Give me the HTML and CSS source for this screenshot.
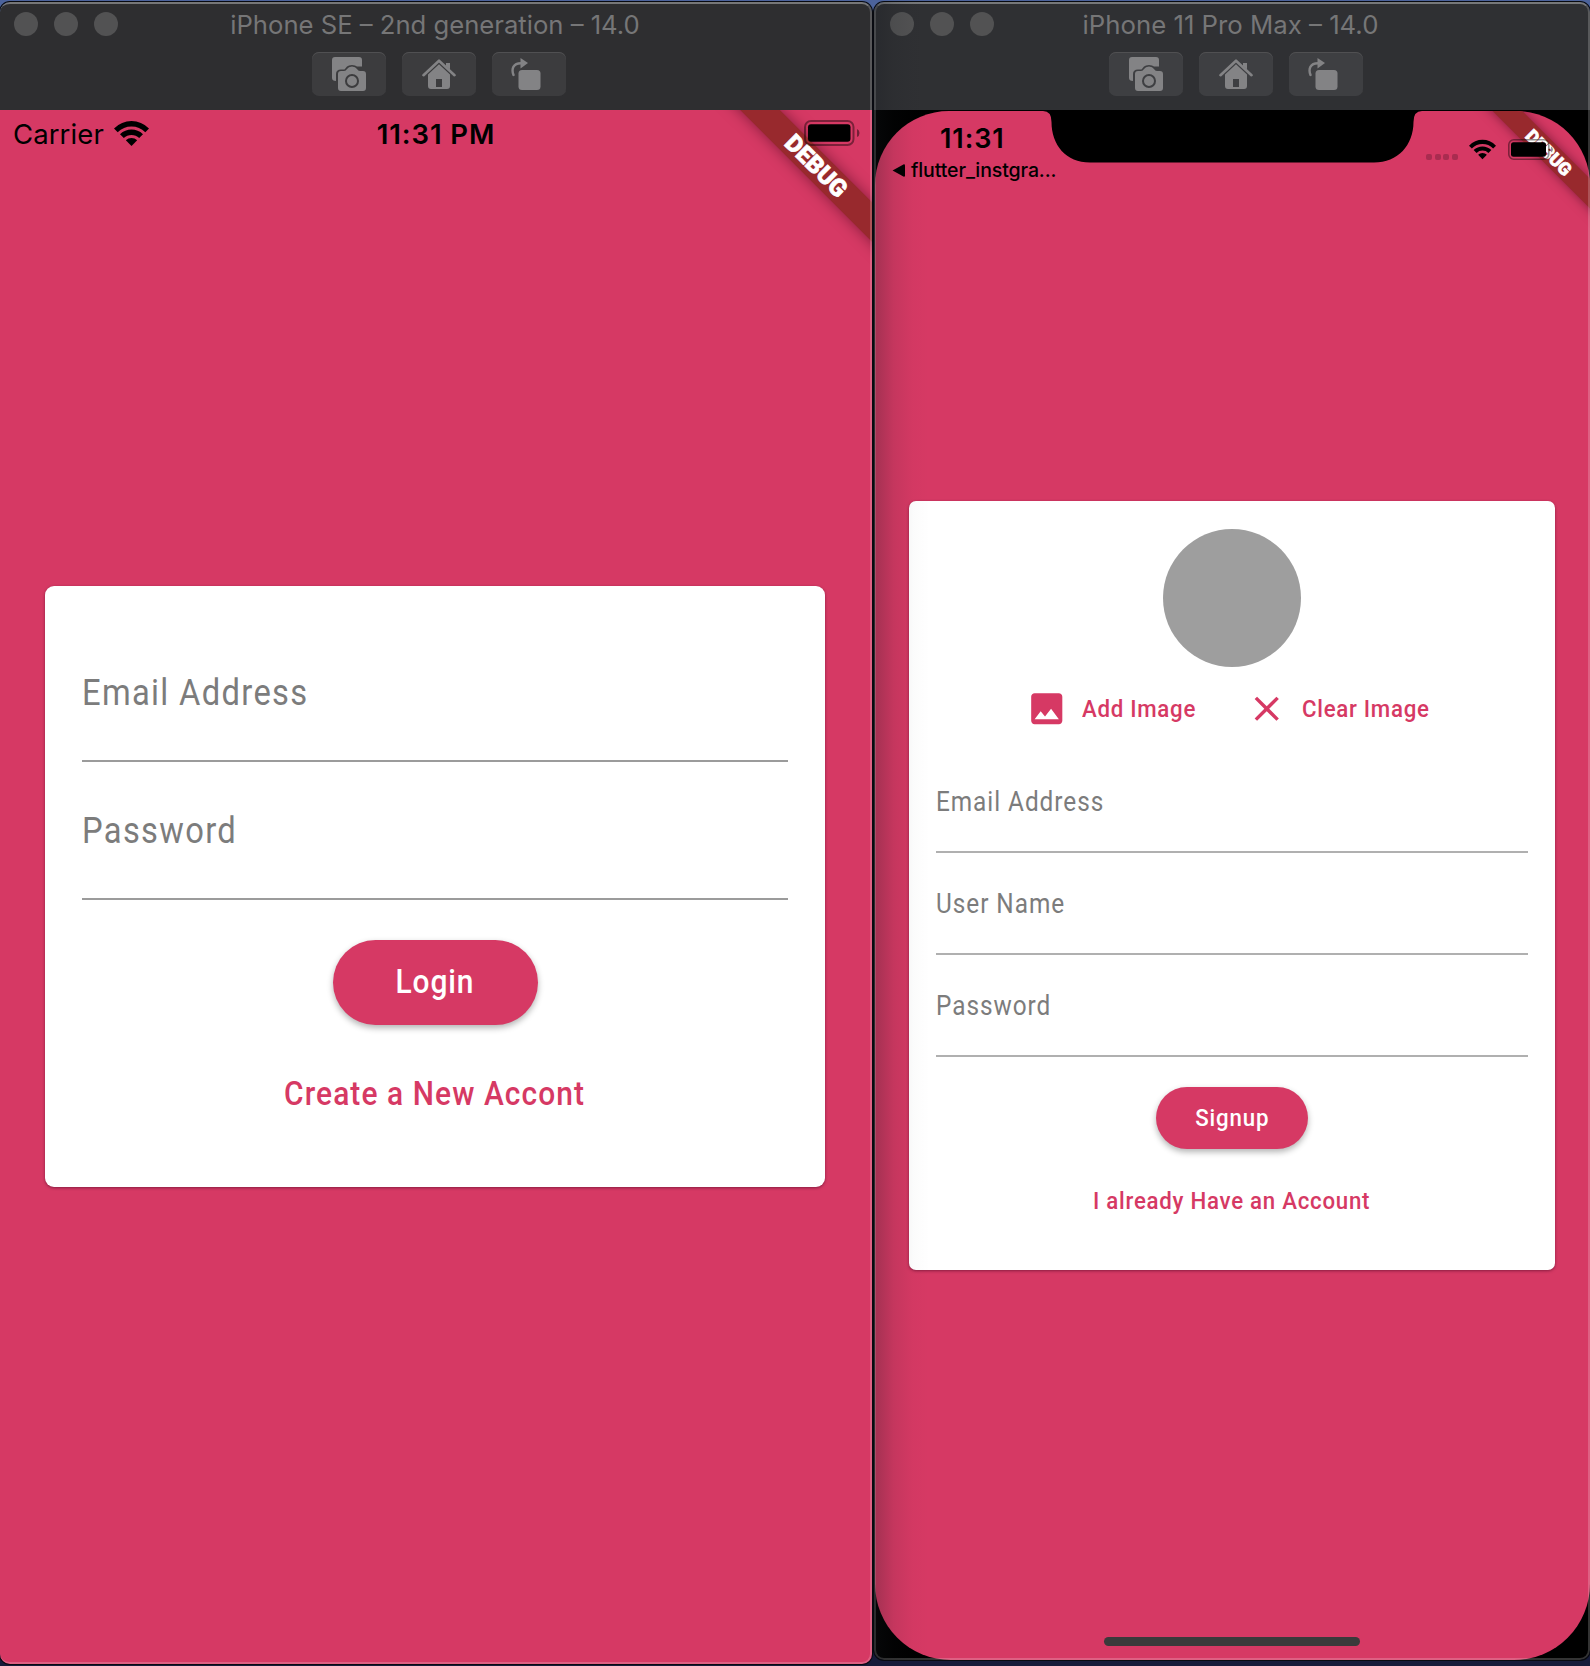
FILE: index.html
```html
<!DOCTYPE html>
<html lang="en">
<head>
<meta charset="utf-8">
<title>Simulators</title>
<link rel="stylesheet" href="styles.css">
</head>
<body>
<svg class="defs" width="0" height="0" aria-hidden="true">
  <symbol id="shot" viewBox="0 0 34 34">
    <path d="M3 0H27Q30 0 30 3V9.500H25Q23.500 8 20 8Q16.500 8 15 9.500L12.500 12.500H9Q4 12.500 4 17V24Q0 24 0 21V3Q0 0 3 0Z"/>
    <path fill-rule="evenodd" d="M9 14H12Q14 14 15 12Q16.500 9.500 20 9.500Q23.500 9.500 25 12Q26 14 28 14H31Q34 14 34 17V31Q34 34 31 34H9Q6 34 6 31V17Q6 14 9 14ZM20 17A7 7 0 1 0 20 31A7 7 0 1 0 20 17ZM20 19A5 5 0 1 1 20 29A5 5 0 1 1 20 19Z"/>
  </symbol>
  <symbol id="house" viewBox="0 0 34 30">
    <path d="M1.500 16.200L17 1.700L32.500 16.200" fill="none" stroke="currentColor" stroke-width="2.600" stroke-linecap="round" stroke-linejoin="round"/>
    <path d="M24 4H28V10.500L24 7Z"/>
    <path fill-rule="evenodd" d="M17 5.200L28 15.500V27Q28 30 25 30H9Q6 30 6 27V15.500ZM14 20V28H20V20Z"/>
  </symbol>
  <symbol id="rotate" viewBox="0 0 30 32">
    <rect x="7.500" y="12" width="22" height="20" rx="3.500"/>
    <path d="M9.500 0L17 5L9.500 10.500Z"/>
    <path d="M2.500 17C.2 11 2 5.200 10 5.200" fill="none" stroke="currentColor" stroke-width="2.400" stroke-linecap="round"/>
  </symbol>
  <symbol id="wifi" viewBox="0 0 35 25">
    <path d="M0 7.500Q7.500 0 17.500 0T35 7.500L31.300 11.200Q25.500 5.400 17.500 5.400T3.700 11.200Z"/>
    <path d="M6 13.200Q11 8.600 17.500 8.600T29 13.200L25.200 17Q22 13.900 17.500 13.900T9.800 17Z"/>
    <path d="M11.800 19.200Q14.200 17.100 17.500 17.100T23.200 19.200L17.500 25Z"/>
  </symbol>
</svg>

<main class="desktop">
  <section class="window window-se">
    <header class="titlebar">
      <div class="title-row">
        <div class="lights"><i></i><i></i><i></i></div>
        <h1 class="title">iPhone SE – 2nd generation – 14.0</h1>
      </div>
      <div class="tools">
        <button><svg class="i-shot"><use href="#shot"/></svg></button>
        <button><svg class="i-house"><use href="#house"/></svg></button>
        <button><svg class="i-rotate"><use href="#rotate"/></svg></button>
      </div>
    </header>
    <div class="screen">
      <div class="ribbon"><span>DEBUG</span></div>
      <div class="status">
        <div class="carrier"><span>Carrier</span><svg class="wifi"><use href="#wifi"/></svg></div>
        <time class="clock">11:31 PM</time>
        <svg class="battery" width="56" height="26" viewBox="0 0 56 26"><rect x="1" y="1" width="48.500" height="24" rx="6" fill="none" stroke="#000" stroke-opacity=".42" stroke-width="2"/><rect x="4" y="4.300" width="42.500" height="17.500" rx="3"/><path d="M53 9Q55.500 10 55.500 13T53 17Z" opacity=".45"/></svg>
      </div>
      <form class="card">
        <label class="field"><span>Email Address</span></label>
        <label class="field"><span>Password</span></label>
        <button type="button" class="submit"><span>Login</span></button>
        <a class="link"><span>Create a New Accont</span></a>
      </form>
    </div>
  </section>

  <section class="window window-max">
    <header class="titlebar">
      <div class="title-row">
        <div class="lights"><i></i><i></i><i></i></div>
        <h1 class="title">iPhone 11 Pro Max – 14.0</h1>
      </div>
      <div class="tools">
        <button><svg class="i-shot"><use href="#shot"/></svg></button>
        <button><svg class="i-house"><use href="#house"/></svg></button>
        <button><svg class="i-rotate"><use href="#rotate"/></svg></button>
      </div>
    </header>
    <div class="bezel">
      <div class="screen">
        <div class="ribbon"><span>DEBUG</span></div>
        <svg class="notch" width="380" height="53" viewBox="0 0 380 53"><path d="M0 0H380V1Q371.500 1 371.500 12C371.500 35 356 52.500 332 52.500H48C24 52.500 9.500 35 9.500 12Q9.500 1 1 1H0Z"/></svg>
        <div class="status">
          <div class="status-left">
            <time class="clock">11:31</time>
            <div class="back"><svg width="13" height="13" viewBox="0 0 12 12"><path d="M.5 6L10.500 .4Q12 0 12 1.500V10.500Q12 12 10.500 11.600Z"/></svg><span>flutter_instgra...</span></div>
          </div>
          <div class="status-right">
            <div class="dots"><i></i><i></i><i></i><i></i></div>
            <svg class="wifi"><use href="#wifi"/></svg>
            <svg class="battery" width="46" height="21" viewBox="0 0 46 21"><rect x=".8" y=".8" width="40" height="19.400" rx="5" fill="none" stroke="#000" stroke-opacity=".42" stroke-width="1.600"/><rect x="3" y="3.300" width="35" height="14.500" rx="2.500"/><path d="M43 7.500Q45 8.500 45 10.500T43 13.500Z" opacity=".4"/></svg>
          </div>
        </div>
        <form class="card">
          <div class="avatar"></div>
          <div class="actions">
            <a class="add"><svg viewBox="0 0 24 24"><path d="M21 19V5c0-1.100-.9-2-2-2H5c-1.100 0-2 .9-2 2v14c0 1.100.9 2 2 2h14c1.100 0 2-.9 2-2zM8.500 13.500l2.500 3.010L14.500 12l4.500 6H5l3.500-4.500z"/></svg><span>Add Image</span></a>
            <a class="clear"><svg viewBox="0 0 24 24"><path d="M19 6.410L17.590 5 12 10.590 6.410 5 5 6.410 10.590 12 5 17.590 6.410 19 12 13.410 17.590 19 19 17.590 13.410 12z"/></svg><span>Clear Image</span></a>
          </div>
          <label class="field"><span>Email Address</span></label>
          <label class="field"><span>User Name</span></label>
          <label class="field"><span>Password</span></label>
          <button type="button" class="submit"><span>Signup</span></button>
          <a class="link"><span>I already Have an Account</span></a>
        </form>
        <div class="home-bar"></div>
      </div>
    </div>
  </section>
</main>
</body>
</html>
```
FILE: styles.css
```css
* { box-sizing: border-box; }
body { margin: 0; overflow: hidden; }
.defs { position: absolute; }
svg { display: block; fill: currentColor; }
h1 { margin: 0; font-weight: 400; }
button { border: 0; padding: 0; font: inherit; }

.desktop {
  display: flex;
  align-items: flex-start;
  gap: 2px;
  width: 1590px;
  height: 1666px;
  padding-top: 2px;
  background: linear-gradient(#4c639c 0, #4c639c 14px, #06070c 30px, #06070c 1640px, #161b3a 1652px);
}

.window {
  position: relative;
  display: flex;
  flex-direction: column;
  overflow: hidden;
  border-radius: 10px;
  font-family: Inter, "Liberation Sans", sans-serif;
  box-shadow: 0 0 0 1px #080a10;
}
.window::after {
  content: "";
  position: absolute;
  inset: 0;
  border: 2px solid rgba(255, 255, 255, .2);
  border-top-color: rgba(255, 255, 255, .35);
  border-radius: 10px;
  pointer-events: none;
}
.window-se { width: 872px; height: 1662px; z-index: 1; }
.window-se::after { border-left: 0; }
.window-max { width: 716px; height: 1658px; }
.window-max::before {
  content: "";
  position: absolute;
  z-index: 2;
  inset: 0 auto 0 0;
  width: 56px;
  background: linear-gradient(90deg, rgba(22, 26, 32, .27), rgba(22, 26, 32, .09) 35%, rgba(22, 26, 32, .015) 70%, transparent);
}

.titlebar { flex: none; height: 108px; background: #2e2e30; }
.window-max .titlebar { background: #2f3033; }
.title-row {
  display: grid;
  grid-template-columns: 140px 1fr 140px;
  height: 44px;
}
.lights { display: flex; gap: 16px; padding: 10px 0 0 14px; }
.window-max .lights { padding-left: 16px; }
.lights i { width: 24px; height: 24px; border-radius: 50%; background: #525253; }
.title {
  padding-right: 2px;
  font-size: 25.650px;
  line-height: 46px;
  color: #767677;
  text-align: center;
  white-space: nowrap;
}
.window-max .title { padding-right: 3px; font-size: 25.750px; }
.tools { display: flex; justify-content: center; gap: 16px; padding: 6px 0 0 6px; }
.window-max .tools { padding-left: 8px; }
.tools button {
  width: 74px;
  height: 44px;
  border-radius: 7px;
  background: #3c3c3e;
  box-shadow: inset 0 1px #505052;
  color: #838385;
}
.window-max .tools button { background: #3e3f42; }
.i-shot { width: 34px; height: 34px; margin-left: 20px; }
.i-house { width: 34px; height: 30px; margin-left: 20px; }
.i-rotate { width: 30px; height: 32px; margin-left: 18.500px; }

.screen {
  position: relative;
  flex: 1;
  overflow: hidden;
  background: #d63964;
}
.bezel { flex: 1; display: flex; padding: 1px 0 0 1px; background: #000; }
.window-max .screen { border-radius: 74px 74px 76px 76px; }

.ribbon {
  position: absolute;
  top: 56px;
  right: 56px;
  width: 0;
  height: 0;
}
.ribbon span {
  position: absolute;
  left: -190px;
  top: -14px;
  width: 380px;
  height: 28px;
  transform: rotate(45deg);
  background: #98292d;
  box-shadow: 0 0 14px rgba(50, 0, 20, .5);
  color: #fff;
  font: 900 24px/29px Roboto, sans-serif;
  -webkit-text-stroke: .7px #fff;
  text-align: center;
}
.window-max .ribbon { top: 41.500px; right: 41.500px; }
.window-max .ribbon span {
  top: -10.400px;
  height: 20.800px;
  font-size: 17.800px;
  line-height: 21.500px;
  box-shadow: 0 0 11px rgba(50, 0, 20, .5);
}

.status { position: relative; color: #000; }
.window-se .status {
  display: grid;
  grid-template-columns: 1fr auto 1fr;
  align-items: center;
  height: 48px;
  padding: 0 12px 0 13px;
}
.carrier { display: flex; gap: 10px; font-size: 27.500px; letter-spacing: .1px; }
.carrier .wifi { width: 35px; height: 25px; margin-top: 4px; }
.clock { font-weight: 600; font-size: 27.500px; letter-spacing: .9px; }
.window-se .clock { padding-right: 1px; }
.window-se .battery { justify-self: end; margin-top: -3px; }

.notch { position: absolute; left: 167px; top: -1px; color: #000; }
.window-max .status {
  display: flex;
  justify-content: space-between;
  height: 80px;
  padding: 12px 36px 0 17px;
}
.status-left .clock { display: block; padding-left: 48px; line-height: 32px; font-size: 27px; letter-spacing: .9px; }
.back {
  display: flex;
  align-items: center;
  gap: 6px;
  font-size: 19.500px;
  font-weight: 500;
  letter-spacing: -.1px;
  line-height: 30px;
}
.back svg { margin-top: 1px; }
.status-right { display: flex; align-items: flex-start; padding-top: 16px; }
.dots { display: flex; gap: 2.700px; padding-top: 15px; }
.dots i { width: 6px; height: 6px; border-radius: 2px; background: #a92c50; }
.status-right .wifi { width: 27px; height: 21px; margin: 0 12px 0 11px; }

.card {
  position: absolute;
  display: flex;
  flex-direction: column;
  background: #fff;
  font-family: Roboto, "Liberation Sans", sans-serif;
  white-space: nowrap;
}
.card span { display: inline-block; transform: scaleX(.92); }
.window-se .card {
  left: 45px;
  top: 476px;
  width: 780px;
  height: 601px;
  padding: 38.500px 37px 0 37px;
  border-radius: 9px;
  box-shadow: 0 1px 3px rgba(60, 0, 30, .5);
}
.window-max .card {
  left: 34px;
  top: 390px;
  width: 646px;
  height: 769px;
  padding: 27.500px 27.500px 0 27px;
  border-radius: 7px;
  box-shadow: 0 1px 3px rgba(60, 0, 30, .5);
}
.field {
  flex: none;
  height: 137.500px;
  padding: 45.500px 0 0;
  border-bottom: 2px solid #9b9b9b;
  font-size: 37.200px;
  letter-spacing: 1.500px;
  line-height: 44px;
  color: #7c7c7c;
}
.card .field span { transform: scaleX(.88); transform-origin: 0 50%; }
.submit {
  flex: none;
  align-self: center;
  width: 205px;
  height: 84.500px;
  margin-top: 40.500px;
  border-radius: 43px;
  background: #d63964;
  box-shadow: 0 3px 6px rgba(0, 0, 0, .3);
  color: #fff;
  font-weight: 500;
  font-size: 32.500px;
  letter-spacing: 1px;
}
.link {
  margin-top: 49px;
  color: #d63964;
  font-weight: 500;
  font-size: 32.500px;
  letter-spacing: 1.180px;
  line-height: 40px;
  text-align: center;
}
.link span { margin: 0 -20px; }
.window-max .field {
  height: 102px;
  padding-top: 34.500px;
  border-bottom-color: #b0b0b0;
  font-size: 27.700px;
  letter-spacing: 1.080px;
  line-height: 32px;
}
.window-max .submit { width: 152px; height: 62px; margin-top: 30px; font-size: 24.200px; letter-spacing: .9px; }
.window-max .link { margin-top: 36.500px; font-size: 24.200px; letter-spacing: .8px; line-height: 30px; }
.avatar {
  flex: none;
  align-self: center;
  width: 138px;
  height: 138px;
  border-radius: 50%;
  background: #9e9e9e;
}
.actions {
  display: flex;
  height: 41.500px;
  margin: 21px 0 22px;
  padding-left: 90px;
  color: #d63964;
  font-weight: 500;
  font-size: 24.200px;
  letter-spacing: .78px;
  line-height: 42px;
}
.actions a { display: flex; gap: 14px; }
.actions span { transform-origin: 0 50%; }
.actions .add { width: 220px; }
.actions svg { flex: none; width: 41.500px; height: 41.500px; }

.home-bar {
  position: absolute;
  left: 229px;
  bottom: 14px;
  width: 256px;
  height: 9px;
  border-radius: 5px;
  background: #3b3a3b;
}
```
